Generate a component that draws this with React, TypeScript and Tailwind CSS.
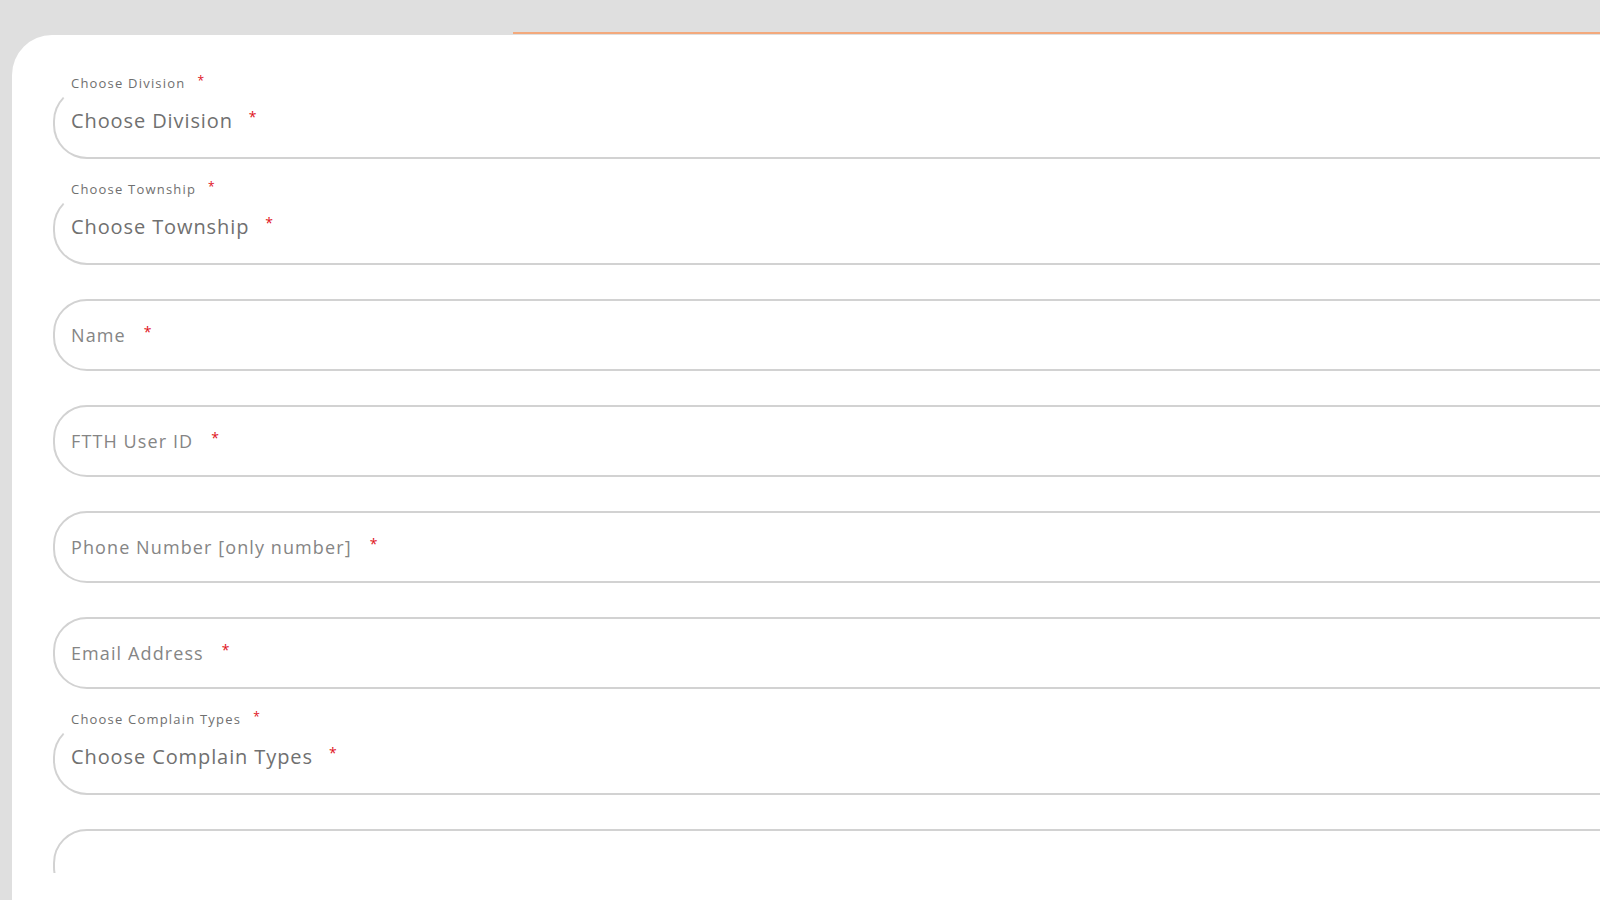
import React from 'react'

interface Field {
  label: string
  kind: 'select' | 'input'
}

const fields: Field[] = [
  { label: 'Choose Division', kind: 'select' },
  { label: 'Choose Township', kind: 'select' },
  { label: 'Name', kind: 'input' },
  { label: 'FTTH User ID', kind: 'input' },
  { label: 'Phone Number [only number]', kind: 'input' },
  { label: 'Email Address', kind: 'input' },
  { label: 'Choose Complain Types', kind: 'select' },
]

function Star({ className }: { className: string }) {
  return <span className={`tracking-normal text-[#e0111b] ${className}`}>*</span>
}

function SelectField({ label }: { label: string }) {
  return (
    <div className="relative h-[72px] w-[1700px] rounded-l-[34px] border-2 border-[#d2d2d2] border-t-transparent">
      {/* floating label */}
      <div className="absolute -top-[14px] left-[16px] flex items-start bg-white pr-2 text-[13px] leading-[16px] tracking-[1.2px] text-[#6f6f6f]">
        {label}
        <Star className="ml-[12px] -mt-[2px] text-[12px]" />
      </div>
      <div className="flex h-full items-center pb-[5px] pl-[16px] text-[20px] tracking-[0.9px] text-[#707070]">
        {label}
        <Star className="ml-[16px] -mt-[8px] text-[14px]" />
      </div>
    </div>
  )
}

function InputField({ label }: { label: string }) {
  return (
    <div className="flex h-[72px] w-[1700px] items-center rounded-l-[34px] border-2 border-[#d2d2d2] pl-[16px] text-[18px] tracking-[1.1px] text-[#858585]">
      {label}
      <Star className="ml-[18px] -mt-[8px] text-[14px]" />
    </div>
  )
}

export default function App() {
  return (
    <div
      className="h-[900px] w-[1600px] overflow-hidden bg-[#dfdfdf] pl-[12px] pt-[32px]"
      style={{ fontFamily: '"Open Sans", "Liberation Sans", sans-serif' }}
    >
      {/* progress line */}
      <div className="ml-[501px] h-[2px] bg-[#f3a97c]" />
      <div className="mt-[1px] h-[865px] overflow-hidden rounded-tl-[40px] bg-white pl-[41px] pt-[52px]">
        <div className="flex flex-col gap-[34px]">
          {fields.map((f) =>
            f.kind === 'select' ? (
              <SelectField key={f.label} label={f.label} />
            ) : (
              <InputField key={f.label} label={f.label} />
            )
          )}
          {/* textarea, cut off by the viewport */}
          <div className="h-[44px] overflow-hidden">
            <div className="h-[72px] w-[1700px] rounded-l-[34px] border-2 border-[#d2d2d2]" />
          </div>
        </div>
      </div>
    </div>
  )
}
